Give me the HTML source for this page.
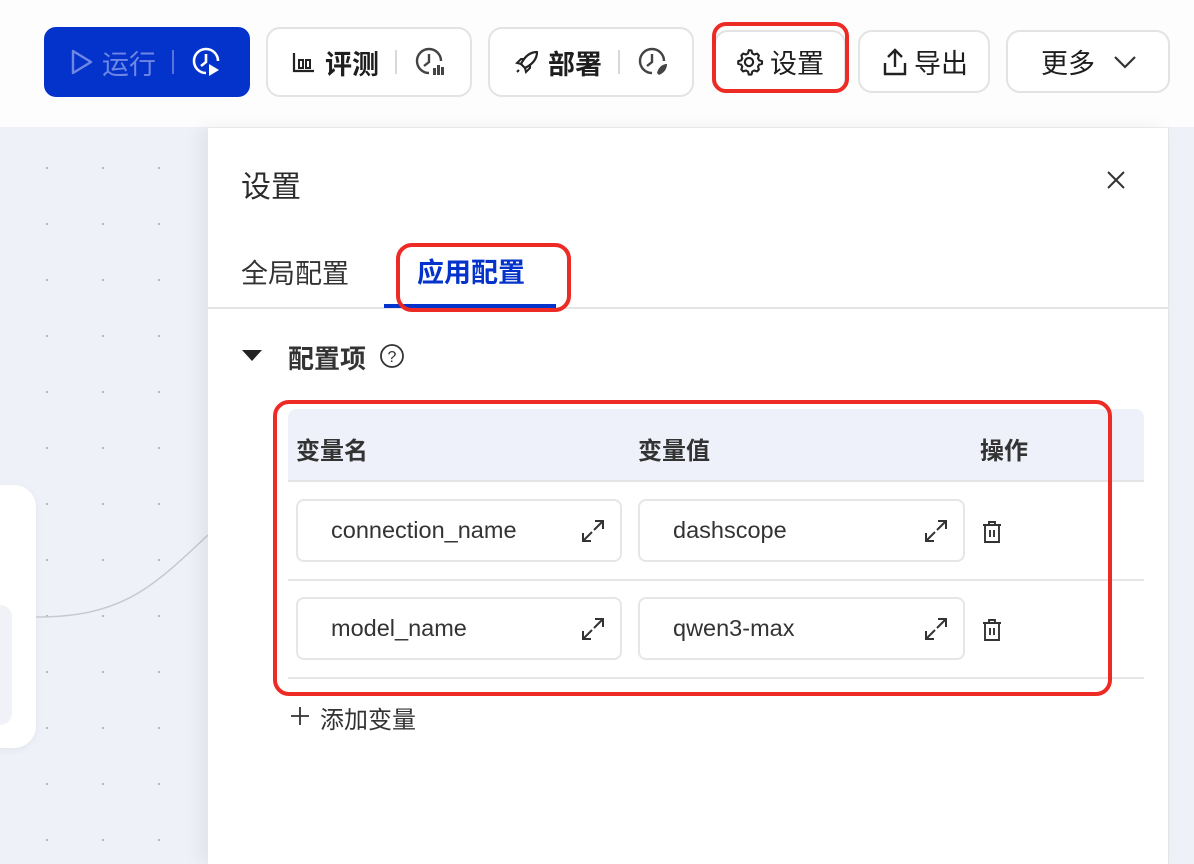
<!DOCTYPE html>
<html><head><meta charset="utf-8"><style>
*{box-sizing:border-box;margin:0;padding:0}
body{width:1194px;height:864px;overflow:hidden;position:relative;background:#fdfdfd;font-family:"Liberation Sans","Noto Sans CJK SC",sans-serif;color:#222}
.a{position:absolute}
.canvas{left:0;top:127px;width:1194px;height:737px;background-color:#eef1f8;background-image:radial-gradient(circle,#b8bcc6 1.1px,transparent 1.3px);background-size:56px 56px;background-position:19px 13px}
.btn{position:absolute;border:2px solid #e3e3e3;border-radius:14px;background:#fff;font-size:27px;font-weight:bold;display:flex;align-items:center;color:#1e1e1e}
.sep{width:2px;height:24px;background:#d8d8d8;margin:0 16px}
.red{position:absolute;border:4px solid #ee2a24;border-radius:14px}
.inp{position:absolute;height:63px;border:2px solid #e6e6e6;border-radius:8px;background:#fff;font-size:23.5px;color:#333;padding-left:33px;line-height:59px}
.exp{position:absolute;right:14px;top:17px}
</style></head><body>
<div class="a canvas"></div>
<div class="a" style="left:-30px;top:485px;width:66px;height:263px;background:#fff;border-radius:22px;box-shadow:0 2px 8px rgba(0,0,0,.05)"></div>
<div class="a" style="left:-20px;top:605px;width:32px;height:120px;background:#f0f2f7;border-radius:12px"></div>
<svg class="a" style="left:0;top:0" width="260" height="864"><path d="M36 617 C120 617 150 590 208 535" stroke="#c6c8cc" stroke-width="1.5" fill="none"/></svg>

<div class="btn" style="left:44px;top:27px;width:206px;height:70px;background:#0433cc;border-color:#0433cc;color:#6f86e3;padding-left:24px;border-radius:12px">
<svg width="24" height="26" viewBox="0 0 24 26"><path d="M3 2 L21 13 L3 24 Z" fill="none" stroke="#6f86e3" stroke-width="2.4" stroke-linejoin="round"/></svg>
<span style="margin-left:8px;font-weight:normal">运行</span><div class="sep" style="background:#5a73d8"></div>
<svg width="34" height="34" viewBox="0 0 34 34"><path d="M28 16 A12 12 0 1 0 16 28" fill="none" stroke="#fff" stroke-width="2.6"/><path d="M16 9 V17 L11 21" fill="none" stroke="#fff" stroke-width="2.6"/><path d="M19 19 L29 25 L19 31 Z" fill="#fff"/></svg></div>
<div class="btn" style="left:266px;top:27px;width:206px;height:70px;padding-left:24px">
<svg width="24" height="24" viewBox="0 0 24 24"><path d="M2 3 V21 H22" fill="none" stroke="#222" stroke-width="2.2"/><rect x="7" y="10" width="4" height="8" fill="none" stroke="#222" stroke-width="2"/><rect x="14" y="10" width="4" height="8" fill="none" stroke="#222" stroke-width="2"/></svg>
<span style="margin-left:9px">评测</span><div class="sep"></div>
<svg width="34" height="34" viewBox="0 0 34 34"><path d="M28 16 A12 12 0 1 0 16 28" fill="none" stroke="#444" stroke-width="2.4"/><path d="M16 9 V17 L11 21" fill="none" stroke="#444" stroke-width="2.4"/><rect x="20" y="23" width="3" height="7" fill="#444"/><rect x="24" y="20" width="3" height="10" fill="#444"/><rect x="28" y="22" width="3" height="8" fill="#444"/></svg></div>
<div class="btn" style="left:488px;top:27px;width:206px;height:70px;padding-left:24px">
<svg width="26" height="26" viewBox="0 0 26 26"><path d="M23 3 C15 3 10 9 7 15 L11 19 C17 16 23 11 23 3 Z" fill="none" stroke="#222" stroke-width="2.2" stroke-linejoin="round"/><path d="M7 15 L3 14 L7 10 L11 10 M11 19 L12 23 L16 19 L16 15" fill="none" stroke="#222" stroke-width="2"/><path d="M5 21 L3 23" stroke="#222" stroke-width="2"/></svg>
<span style="margin-left:8px">部署</span><div class="sep"></div>
<svg width="34" height="34" viewBox="0 0 34 34"><path d="M28 16 A12 12 0 1 0 16 28" fill="none" stroke="#444" stroke-width="2.4"/><path d="M16 9 V17 L11 21" fill="none" stroke="#444" stroke-width="2.4"/><path d="M31 19 C26 19 22 23 21 28 L23 30 C28 28 31 24 31 19Z" fill="#444"/></svg></div>
<div class="btn" style="left:714px;top:30px;width:132px;height:63px;padding-left:18px">
<svg width="30" height="30" viewBox="0 0 24 24"><path d="M12 2.5l2 .3.6 2.3 1.6.9 2.3-.7 1.4 1.5-.7 2.3.9 1.6 2.3.6v2.2l-2.3.6-.9 1.6.7 2.3-1.4 1.5-2.3-.7-1.6.9-.6 2.3h-2.2l-.6-2.3-1.6-.9-2.3.7-1.4-1.5.7-2.3-.9-1.6-2.3-.6v-2.2l2.3-.6.9-1.6-.7-2.3 1.4-1.5 2.3.7 1.6-.9.6-2.3z" fill="none" stroke="#222" stroke-width="1.7" stroke-linejoin="round"/><circle cx="12" cy="12" r="3.3" fill="none" stroke="#222" stroke-width="1.7"/></svg>
<span style="margin-left:6px;font-weight:normal">设置</span></div>
<div class="red" style="left:712px;top:22px;width:137px;height:71px;border-radius:14px"></div>
<div class="btn" style="left:858px;top:30px;width:132px;height:63px;padding-left:22px">
<svg width="26" height="30" viewBox="0 0 26 30"><path d="M13 20 V3 M6 10 L13 3 L20 10" fill="none" stroke="#222" stroke-width="2.4"/><path d="M3 16 V27 H23 V16" fill="none" stroke="#222" stroke-width="2.4"/></svg>
<span style="margin-left:6px;font-weight:normal">导出</span></div>
<div class="btn" style="left:1006px;top:30px;width:164px;height:63px;padding-left:33px">
<span style="font-weight:normal">更多</span>
<svg style="margin-left:18px" width="24" height="14" viewBox="0 0 24 14"><path d="M2 2 L12 12 L22 2" fill="none" stroke="#333" stroke-width="2.2"/></svg></div>

<div class="a" style="left:208px;top:127px;width:961px;height:737px;background:#fff;border-right:1.5px solid #e3e3e3;border-top:1.5px solid #eaeaea;box-shadow:-8px 0 16px rgba(0,0,0,.06)"></div>
<div class="a" style="left:241px;top:162px;font-size:30px;color:#2b2b2b">设置</div>
<svg class="a" style="left:1106px;top:170px" width="20" height="20"><path d="M2 2 L18 18 M18 2 L2 18" stroke="#333" stroke-width="2"/></svg>
<div class="a" style="left:241px;top:252px;font-size:27px;color:#333">全局配置</div>
<div class="a" style="left:417px;top:251px;font-size:27px;color:#0433cc;font-weight:bold">应用配置</div>
<div class="a" style="left:208px;top:307px;width:961px;height:2px;background:#e4e4e4"></div>
<div class="a" style="left:384px;top:304px;width:172px;height:4px;background:#0433cc"></div>
<div class="red" style="left:396px;top:243px;width:175px;height:69px;border-radius:16px"></div>

<svg class="a" style="left:242px;top:350px" width="20" height="12"><path d="M0 0 H20 L10 11 Z" fill="#222"/></svg>
<div class="a" style="left:288px;top:339px;font-size:26px;font-weight:bold;color:#333">配置项</div>
<svg class="a" style="left:379px;top:343px" width="26" height="26"><circle cx="13" cy="13" r="11" fill="none" stroke="#333" stroke-width="1.8"/><text x="13" y="19" text-anchor="middle" font-size="16" font-family="Liberation Sans" fill="#333">?</text></svg>

<div class="a" style="left:288px;top:409px;width:856px;height:73px;background:#eef1f9;border-radius:8px 8px 0 0;border-bottom:2px solid #e4e4e4"></div>
<div class="a" style="left:296px;top:431px;font-size:24px;font-weight:bold;color:#333">变量名</div>
<div class="a" style="left:638px;top:431px;font-size:24px;font-weight:bold;color:#333">变量值</div>
<div class="a" style="left:980px;top:431px;font-size:24px;font-weight:bold;color:#333">操作</div>
<div class="a" style="left:288px;top:579px;width:856px;height:2px;background:#e6e6e6"></div>
<div class="a" style="left:288px;top:677px;width:856px;height:2px;background:#e6e6e6"></div>

<div class="inp" style="left:296px;top:499px;width:326px">connection_name<svg class="exp" width="26" height="26" viewBox="0 0 26 26"><path d="M15 3 H23 V11 M23 3 L14 12 M3 15 V23 H11 M3 23 L12 14" fill="none" stroke="#333" stroke-width="2"/></svg></div>
<div class="inp" style="left:638px;top:499px;width:327px">dashscope<svg class="exp" width="26" height="26" viewBox="0 0 26 26"><path d="M15 3 H23 V11 M23 3 L14 12 M3 15 V23 H11 M3 23 L12 14" fill="none" stroke="#333" stroke-width="2"/></svg></div>
<div class="inp" style="left:296px;top:597px;width:326px">model_name<svg class="exp" width="26" height="26" viewBox="0 0 26 26"><path d="M15 3 H23 V11 M23 3 L14 12 M3 15 V23 H11 M3 23 L12 14" fill="none" stroke="#333" stroke-width="2"/></svg></div>
<div class="inp" style="left:638px;top:597px;width:327px">qwen3-max<svg class="exp" width="26" height="26" viewBox="0 0 26 26"><path d="M15 3 H23 V11 M23 3 L14 12 M3 15 V23 H11 M3 23 L12 14" fill="none" stroke="#333" stroke-width="2"/></svg></div>
<svg class="a" style="left:982px;top:520px" width="20" height="24" viewBox="0 0 20 24"><path d="M1 5 H19 M7 5 V2 H13 V5 M3 5 V22 H17 V5 M8 10 V17 M12 10 V17" fill="none" stroke="#333" stroke-width="1.9"/></svg>
<svg class="a" style="left:982px;top:618px" width="20" height="24" viewBox="0 0 20 24"><path d="M1 5 H19 M7 5 V2 H13 V5 M3 5 V22 H17 V5 M8 10 V17 M12 10 V17" fill="none" stroke="#333" stroke-width="1.9"/></svg>
<div class="red" style="left:273px;top:400px;width:839px;height:296px;border-radius:16px"></div>

<svg class="a" style="left:290px;top:706px" width="20" height="20"><path d="M10 1 V19 M1 10 H19" stroke="#333" stroke-width="1.8"/></svg>
<div class="a" style="left:320px;top:700px;font-size:24px;color:#333">添加变量</div>
</body></html>
